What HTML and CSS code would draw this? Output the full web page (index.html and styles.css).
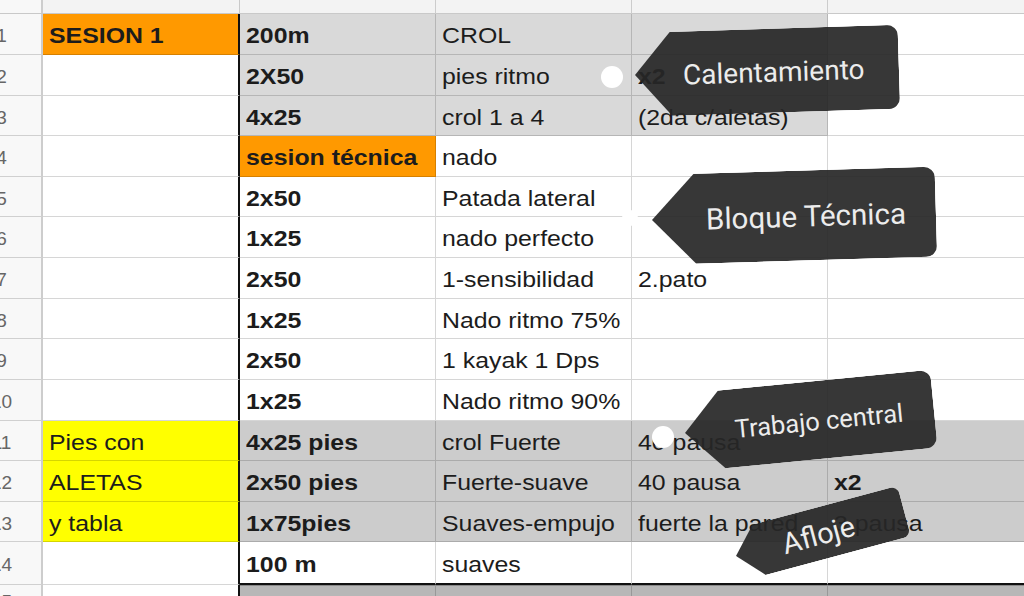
FILE: index.html
```html
<!DOCTYPE html>
<html lang="es">
<head>
<meta charset="utf-8">
<title>Sesion 1</title>
<link rel="stylesheet" href="styles.css">
</head>
<body>
<div class="sheet">
  <div class="c rn hd"></div><div class="c hd"></div><div class="c hd"></div><div class="c hd"></div><div class="c hd"></div><div class="c hd"></div>

  <div class="c rn"><span>1</span></div>
  <div class="c ca or b"><span>SESION 1</span></div>
  <div class="c g1 b"><span>200m</span></div>
  <div class="c g1"><span>CROL</span></div>
  <div class="c g1"></div>
  <div class="c"></div>

  <div class="c rn"><span>2</span></div>
  <div class="c ca"></div>
  <div class="c g1 b"><span>2X50</span></div>
  <div class="c g1"><span>pies ritmo</span></div>
  <div class="c g1 b"><span>x2</span></div>
  <div class="c"></div>

  <div class="c rn"><span>3</span></div>
  <div class="c ca"></div>
  <div class="c g1 b"><span>4x25</span></div>
  <div class="c g1"><span>crol 1 a 4</span></div>
  <div class="c g1"><span>(2da c/aletas)</span></div>
  <div class="c"></div>

  <div class="c rn"><span>4</span></div>
  <div class="c ca"></div>
  <div class="c or b"><span>sesion técnica</span></div>
  <div class="c"><span>nado</span></div>
  <div class="c"></div>
  <div class="c"></div>

  <div class="c rn"><span>5</span></div>
  <div class="c ca"></div>
  <div class="c b"><span>2x50</span></div>
  <div class="c"><span>Patada lateral</span></div>
  <div class="c"></div>
  <div class="c"></div>

  <div class="c rn"><span>6</span></div>
  <div class="c ca"></div>
  <div class="c b"><span>1x25</span></div>
  <div class="c"><span>nado perfecto</span></div>
  <div class="c"></div>
  <div class="c"></div>

  <div class="c rn"><span>7</span></div>
  <div class="c ca"></div>
  <div class="c b"><span>2x50</span></div>
  <div class="c"><span>1-sensibilidad</span></div>
  <div class="c"><span>2.pato</span></div>
  <div class="c"></div>

  <div class="c rn"><span>8</span></div>
  <div class="c ca"></div>
  <div class="c b"><span>1x25</span></div>
  <div class="c"><span>Nado ritmo 75%</span></div>
  <div class="c"></div>
  <div class="c"></div>

  <div class="c rn"><span>9</span></div>
  <div class="c ca"></div>
  <div class="c b"><span>2x50</span></div>
  <div class="c"><span>1 kayak 1 Dps</span></div>
  <div class="c"></div>
  <div class="c"></div>

  <div class="c rn"><span>10</span></div>
  <div class="c ca"></div>
  <div class="c b"><span>1x25</span></div>
  <div class="c"><span>Nado ritmo 90%</span></div>
  <div class="c"></div>
  <div class="c"></div>

  <div class="c rn"><span>11</span></div>
  <div class="c ca ye"><span>Pies con</span></div>
  <div class="c g2 b"><span>4x25 pies</span></div>
  <div class="c g2"><span>crol Fuerte</span></div>
  <div class="c g2"><span>40 pausa</span></div>
  <div class="c g2"></div>

  <div class="c rn"><span>12</span></div>
  <div class="c ca ye"><span>ALETAS</span></div>
  <div class="c g2 b"><span>2x50 pies</span></div>
  <div class="c g2"><span>Fuerte-suave</span></div>
  <div class="c g2"><span>40 pausa</span></div>
  <div class="c g2 b"><span>x2</span></div>

  <div class="c rn"><span>13</span></div>
  <div class="c ca ye"><span>y tabla</span></div>
  <div class="c g2 b"><span>1x75pies</span></div>
  <div class="c g2"><span>Suaves-empujo</span></div>
  <div class="c g2"><span>fuerte la pared</span></div>
  <div class="c g2"><span>3 pausa</span></div>

  <div class="c rn"><span>14</span></div>
  <div class="c ca"></div>
  <div class="c b end"><span>100 m</span></div>
  <div class="c end"><span>suaves</span></div>
  <div class="c end"></div>
  <div class="c end"></div>

  <div class="c rn"><span>15</span></div>
  <div class="c ca"></div>
  <div class="c g3"></div>
  <div class="c g3"></div>
  <div class="c g3"></div>
  <div class="c g3"></div>
</div>

<div class="dot dot-1"></div>
<div class="dot dot-2"></div>
<div class="dot dot-3"></div>

<div class="tag tag-cal"><span>Calentamiento</span></div>
<div class="tag tag-blo"><span>Bloque Técnica</span></div>
<div class="tag tag-tra"><span>Trabajo central</span></div>
<div class="tag tag-afl"><span>Afloje</span></div>
</body>
</html>
```

FILE: styles.css
```css
html, body {
  margin: 0;
  padding: 0;
  background: #ffffff;
}

body {
  width: 1024px;
  height: 596px;
  overflow: hidden;
  position: relative;
  font-family: "Liberation Sans", Arial, sans-serif;
}

.sheet {
  margin-left: -38px;
  display: grid;
  grid-template-columns: 81px 197px 196px 196px 196px 200px;
  grid-template-rows: 14px 41px 41px 40px 41px 40px 41px 41px 40px 41px 41px 40px 41px 40px 43px 30px;
  font-size: 22px;
  color: #1c1c1c;
}

.c {
  box-sizing: border-box;
  border-right: 1px solid rgba(0, 0, 0, 0.16);
  border-bottom: 1px solid rgba(0, 0, 0, 0.16);
  display: flex;
  align-items: center;
  padding: 4px 0 0 6px;
  white-space: nowrap;
  min-width: 0;
}

.c span {
  display: inline-block;
  transform: scaleX(1.13);
  transform-origin: 0 50%;
}

.hd {
  background: #f3f3f3;
  border-bottom-color: #c9c9c9;
}

.rn {
  background: #f8f8f8;
  color: #666666;
  font-size: 19px;
  justify-content: center;
  padding: 4px 0 0 0;
  border-right: 2px solid #cdcdcd;
}

.rn span {
  transform: none;
}

.ca {
  border-right: 2px solid #111111;
}

.sheet > .hd:nth-child(2) {
  border-right: 1px solid #c9c9c9;
}

.b {
  font-weight: bold;
}

.or {
  background: #ff9900;
}

.ye {
  background: #ffff00;
}

.g1 {
  background: #d9d9d9;
}

.g2 {
  background: #cccccc;
}

.g3 {
  background: #b7b7b7;
  border-top: 1px solid #8a8a8a;
}

.end {
  border-bottom: 2px solid #111111;
}

/* annotation dots */
.dot {
  position: absolute;
  border-radius: 50%;
  background: #ffffff;
}

.dot-1 {
  left: 601px;
  top: 66px;
  width: 22px;
  height: 22px;
}

.dot-2 {
  left: 622px;
  top: 210px;
  width: 16px;
  height: 16px;
}

.dot-3 {
  left: 652px;
  top: 426px;
  width: 22px;
  height: 22px;
}

/* annotation tags */
.tag {
  position: absolute;
  box-sizing: border-box;
  display: flex;
  align-items: center;
  background: rgba(38, 38, 38, 0.92);
  color: #ececec;
  font-family: Roboto, "Noto Sans", sans-serif;
  white-space: nowrap;
  transform-origin: 0 50%;
  border-radius: 0 11px 11px 0;
}

.tag span {
  display: inline-block;
  padding-top: 2px;
}

.tag-cal {
  left: 635px;
  top: 33px;
  width: 264px;
  height: 84px;
  padding: 0 0 0 48px;
  font-size: 28px;
  transform: rotate(-1.8deg);
  clip-path: polygon(0 50%, 36px 0, 100% 0, 100% 100%, 36px 100%);
}

.tag-blo {
  left: 652px;
  top: 175px;
  width: 284px;
  height: 90px;
  padding: 0 0 0 54px;
  font-size: 29.5px;
  transform: rotate(-1.7deg);
  clip-path: polygon(0 50%, 43px 0, 100% 0, 100% 100%, 43px 100%);
}

.tag-tra {
  left: 685px;
  top: 394px;
  width: 250px;
  height: 78px;
  padding: 0 0 0 50px;
  font-size: 25.5px;
  transform: rotate(-5.6deg);
  clip-path: polygon(0 50%, 37px 0, 100% 0, 100% 100%, 37px 100%);
}

.tag-afl {
  left: 736px;
  top: 530px;
  width: 174px;
  height: 52px;
  padding: 0 0 0 48px;
  font-size: 29px;
  transform: rotate(-15deg);
  border-radius: 0 8px 8px 0;
  clip-path: polygon(0 50%, 24px 0, 100% 0, 100% 100%, 24px 100%);
}
```
